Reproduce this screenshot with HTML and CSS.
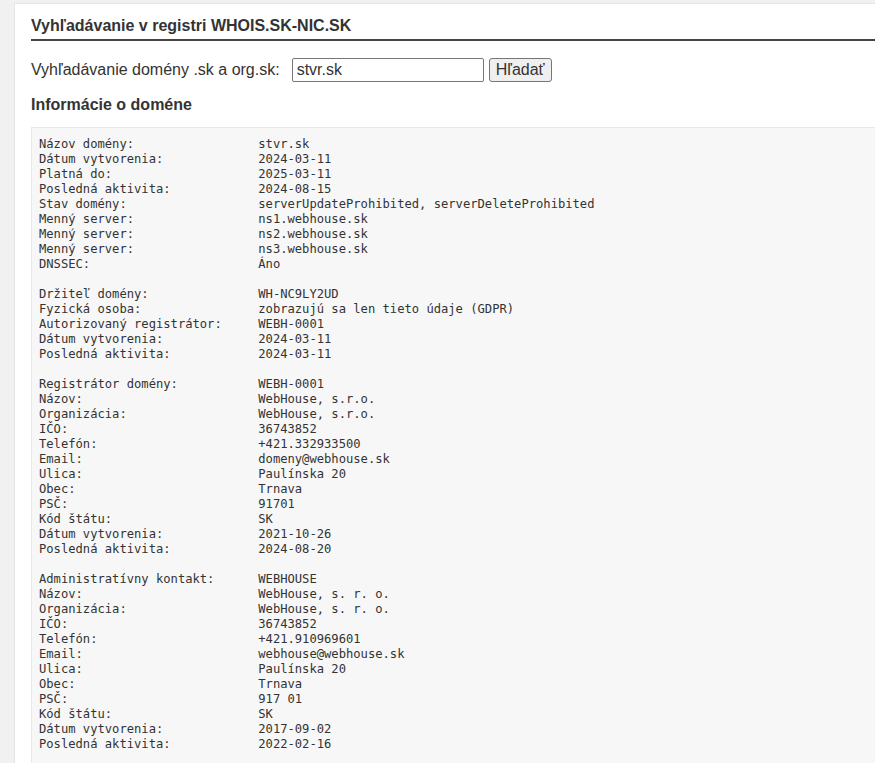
FILE: index.html
```html
<!DOCTYPE html>
<html lang="sk">
<head>
  <meta charset="UTF-8">
  <title>WHOIS.SK-NIC.SK</title>
  <link rel="stylesheet" href="styles.css">
</head>
<body>
  <div class="panel">
    <h2 class="title">Vyhľadávanie v registri WHOIS.SK-NIC.SK</h2>

    <!-- search form -->
    <form class="search">
      <label for="domain">Vyhľadávanie domény .sk a org.sk:</label>
      <input id="domain" type="text" value="stvr.sk">
      <button type="button">Hľadať</button>
    </form>

    <h3 class="subtitle">Informácie o doméne</h3>

    <div class="whois">
      <dl>
        <dt>Názov domény:</dt><dd>stvr.sk</dd>
        <dt>Dátum vytvorenia:</dt><dd>2024-03-11</dd>
        <dt>Platná do:</dt><dd>2025-03-11</dd>
        <dt>Posledná aktivita:</dt><dd>2024-08-15</dd>
        <dt>Stav domény:</dt><dd>serverUpdateProhibited, serverDeleteProhibited</dd>
        <dt>Menný server:</dt><dd>ns1.webhouse.sk</dd>
        <dt>Menný server:</dt><dd>ns2.webhouse.sk</dd>
        <dt>Menný server:</dt><dd>ns3.webhouse.sk</dd>
        <dt>DNSSEC:</dt><dd>Áno</dd>
      </dl>
      <dl>
        <dt>Držiteľ domény:</dt><dd>WH-NC9LY2UD</dd>
        <dt>Fyzická osoba:</dt><dd>zobrazujú sa len tieto údaje (GDPR)</dd>
        <dt>Autorizovaný registrátor:</dt><dd>WEBH-0001</dd>
        <dt>Dátum vytvorenia:</dt><dd>2024-03-11</dd>
        <dt>Posledná aktivita:</dt><dd>2024-03-11</dd>
      </dl>
      <dl>
        <dt>Registrátor domény:</dt><dd>WEBH-0001</dd>
        <dt>Názov:</dt><dd>WebHouse, s.r.o.</dd>
        <dt>Organizácia:</dt><dd>WebHouse, s.r.o.</dd>
        <dt>IČO:</dt><dd>36743852</dd>
        <dt>Telefón:</dt><dd>+421.332933500</dd>
        <dt>Email:</dt><dd>domeny@webhouse.sk</dd>
        <dt>Ulica:</dt><dd>Paulínska 20</dd>
        <dt>Obec:</dt><dd>Trnava</dd>
        <dt>PSČ:</dt><dd>91701</dd>
        <dt>Kód štátu:</dt><dd>SK</dd>
        <dt>Dátum vytvorenia:</dt><dd>2021-10-26</dd>
        <dt>Posledná aktivita:</dt><dd>2024-08-20</dd>
      </dl>
      <dl>
        <dt>Administratívny kontakt:</dt><dd>WEBHOUSE</dd>
        <dt>Názov:</dt><dd>WebHouse, s. r. o.</dd>
        <dt>Organizácia:</dt><dd>WebHouse, s. r. o.</dd>
        <dt>IČO:</dt><dd>36743852</dd>
        <dt>Telefón:</dt><dd>+421.910969601</dd>
        <dt>Email:</dt><dd>webhouse@webhouse.sk</dd>
        <dt>Ulica:</dt><dd>Paulínska 20</dd>
        <dt>Obec:</dt><dd>Trnava</dd>
        <dt>PSČ:</dt><dd>917 01</dd>
        <dt>Kód štátu:</dt><dd>SK</dd>
        <dt>Dátum vytvorenia:</dt><dd>2017-09-02</dd>
        <dt>Posledná aktivita:</dt><dd>2022-02-16</dd>
      </dl>
    </div>
  </div>
</body>
</html>
```

FILE: styles.css
```css
html, body{ height:100%; }
body{
  margin:0;
  padding:3px 0 0 14px;
  background:#f1f1f1;
  color:#333;
  font-family:"Liberation Sans", Arial, sans-serif;
  font-size:16px;
  overflow:hidden;
}
.panel{
  width:900px;
  min-height:100%;
  background:#fff;
  border:1px solid #e4e4e4;
  padding:0 0 0 16px;
}
.title{
  margin:13px 0 0;
  padding-bottom:4px;
  border-bottom:2px solid #444;
  font-size:16px;
  line-height:18px;
}
.search{
  display:flex;
  align-items:center;
  margin-top:17px;
  height:24px;
}
.search label{ margin-right:12px; }
.search input{
  box-sizing:border-box;
  width:192px;
  height:24px;
  padding:1px 4px;
  border:1px solid #767676;
  border-radius:2px;
  font:16px "Liberation Sans", Arial, sans-serif;
  color:#333;
}
.search button{
  box-sizing:border-box;
  height:24px;
  margin-left:5px;
  padding:1px 6px;
  background:#efefef;
  border:1px solid #767676;
  border-radius:3px;
  font:16px "Liberation Sans", Arial, sans-serif;
  color:#333;
}
.subtitle{
  margin:14px 0 0;
  font-size:16px;
  line-height:18px;
}
.whois{
  margin-top:13px;
  min-height:700px;
  background:#f7f7f7;
  border:1px solid #e8e8e8;
  padding:9px 7px 7px;
  font-family:"DejaVu Sans Mono", monospace;
  font-size:12.15px;
  line-height:15px;
  color:#333;
}
.whois dl{
  display:grid;
  grid-template-columns:30ch 1fr;
  margin:0 0 15px;
}
.whois dt, .whois dd{ margin:0; white-space:pre; }
```
